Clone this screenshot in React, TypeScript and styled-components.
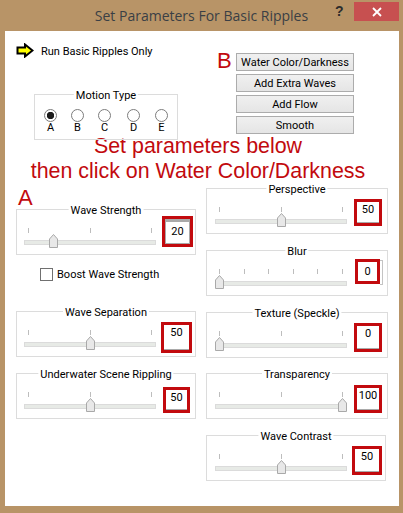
import React from 'react';
import styled, { createGlobalStyle } from 'styled-components';

const GlobalStyle = createGlobalStyle`
    html, body {
        margin: 0;
        padding: 0;
        background: #b89467;
    }
`;

type Field = {
    title: string;
    value: number;
    ticks: number;
    box: { w: number; h: number; x: number; y: number };
    line: 'top' | 'bottom' | 'side';
};

const leftFields: Field[] = [
    { title: 'Wave Separation', value: 50, ticks: 3, box: { w: 31, h: 31, x: 5, y: 10 }, line: 'bottom' },
    { title: 'Underwater Scene Rippling', value: 50, ticks: 3, box: { w: 27, h: 26, x: 7, y: 13 }, line: 'bottom' },
];

const rightFields: Field[] = [
    { title: 'Perspective', value: 50, ticks: 3, box: { w: 28, h: 27, x: 7, y: 10 }, line: 'bottom' },
    { title: 'Blur', value: 0, ticks: 6, box: { w: 25, h: 25, x: 8, y: 8 }, line: 'side' },
    { title: 'Texture (Speckle)', value: 0, ticks: 3, box: { w: 28, h: 29, x: 7, y: 10 }, line: 'bottom' },
    { title: 'Transparency', value: 100, ticks: 3, box: { w: 28, h: 28, x: 7, y: 11 }, line: 'bottom' },
    { title: 'Wave Contrast', value: 50, ticks: 3, box: { w: 30, h: 29, x: 5, y: 10 }, line: 'bottom' },
];

const Thumb = () => (
    <ThumbIcon width="9" height="14" viewBox="0 0 9 14">
        <path d="M0.5 13.5V5L4.5 0.5L8.5 5V13.5Z" fill="#e8e8e8" stroke="#a9a9a9" />
    </ThumbIcon>
);

const ParamGroup: React.FC<{ field: Field; wide?: boolean; narrow?: boolean }> = ({ field, wide, narrow }) => (
    <Group $wide={wide} $narrow={narrow}>
        <Legend>{field.title}</Legend>
        <SliderArea>
            <Ticks>
                {Array.from({ length: field.ticks }).map((_, i) => <Tick key={i} />)}
            </Ticks>
            <Track>
                <ThumbSlot style={{ left: `${(field.value / 100) * 123 - 1}px` }}>
                    <Thumb />
                </ThumbSlot>
            </Track>
        </SliderArea>
        <ValueBox $w={field.box.w} $h={field.box.h} $x={field.box.x} $y={field.box.y}>
            <ValueInner $line={field.line}>{field.value}</ValueInner>
        </ValueBox>
        {field.line === 'side' && <EditEdge />}
    </Group>
);

const App: React.FC = () => {
    return (
        <Frame>
            <GlobalStyle />
            <TitleBar>
                <Title>Set Parameters For Basic Ripples</Title>
                <HelpMark>?</HelpMark>
                <CloseButton>
                    <svg width="10" height="10" viewBox="0 0 10 10">
                        <path d="M1 1L9 9M9 1L1 9" stroke="#fff" strokeWidth="1.8" />
                    </svg>
                </CloseButton>
            </TitleBar>
            <Client>
                <TopRow>
                    <TopLeft>
                        <RunRow>
                            <svg width="18" height="15" viewBox="0 0 18 15">
                                <path d="M1.5 4.5H9V1.5L16.5 7.5L9 13.5V10.5H1.5Z" fill="#ffff00" stroke="#000" strokeWidth="2" />
                            </svg>
                            <RunLabel>Run Basic Ripples Only</RunLabel>
                        </RunRow>
                        <MotionGroup>
                            <Legend>Motion Type</Legend>
                            <RadioRow>
                                {['A', 'B', 'C', 'D', 'E'].map((name, i) => (
                                    <RadioItem key={name}>
                                        <Radio $checked={i === 0} />
                                        <Label>{name}</Label>
                                    </RadioItem>
                                ))}
                            </RadioRow>
                        </MotionGroup>
                    </TopLeft>
                    <TopRight>
                        <BigLetter>B</BigLetter>
                        <ButtonStack>
                            <PushButton>Water Color/Darkness</PushButton>
                            <PushButton>Add Extra Waves</PushButton>
                            <PushButton>Add Flow</PushButton>
                            <PushButton>Smooth</PushButton>
                        </ButtonStack>
                    </TopRight>
                </TopRow>
                <Note>
                    Set parameters below<br />
                    then click on Water Color/Darkness
                </Note>
                <Columns>
                    <LeftColumn>
                        <ALetter>A</ALetter>
                        <ParamGroup field={{ title: 'Wave Strength', value: 20, ticks: 3, box: { w: 31, h: 31, x: 6, y: 6 }, line: 'top' }} />
                        <BoostRow>
                            <CheckBox />
                            <Label>Boost Wave Strength</Label>
                        </BoostRow>
                        <LowerStack>
                            {leftFields.map(f => <ParamGroup key={f.title} field={f} />)}
                        </LowerStack>
                    </LeftColumn>
                    <RightColumn>
                        {rightFields.map(f => (
                            <ParamGroup key={f.title} field={f} wide narrow={f.title === 'Wave Contrast'} />
                        ))}
                    </RightColumn>
                </Columns>
            </Client>
        </Frame>
    );
};

const uiFont = `'Roboto', 'Liberation Sans', Arial, sans-serif`;
const red = '#c20a0e';

const Frame = styled.div`
    width: 403px;
    height: 513px;
    background-color: #b89467;
    overflow: hidden;
    font-family: 'Liberation Sans', Arial, sans-serif;
`;

const TitleBar = styled.div`
    position: relative;
    height: 31px;
    display: flex;
    align-items: center;
    justify-content: center;
`;

const Title = styled.div`
    font-family: 'Open Sans', sans-serif;
    font-size: 14px;
    color: #3a3f45;
`;

const HelpMark = styled.div`
    position: absolute;
    left: 335px;
    top: 3px;
    font-family: 'Liberation Sans', sans-serif;
    font-weight: bold;
    font-size: 14px;
    color: #2c2c2c;
`;

const CloseButton = styled.div`
    position: absolute;
    left: 354px;
    top: 2px;
    width: 45px;
    height: 19px;
    background-color: #c75050;
    display: flex;
    align-items: center;
    justify-content: center;
`;

const Client = styled.div`
    width: 394px;
    height: 475px;
    margin-left: 5px;
    padding: 0 11px;
    box-sizing: border-box;
    background-color: #fff;
`;

const TopRow = styled.div`
    display: flex;
    height: 109px;
`;

const TopLeft = styled.div`
    width: 201px;
`;

const RunRow = styled.div`
    display: flex;
    align-items: center;
    gap: 7px;
    height: 15px;
    margin-top: 12px;
`;

const Label = styled.span`
    font-family: ${uiFont};
    font-size: 11px;
    line-height: 12px;
    color: #000;
    white-space: nowrap;
`;

const RunLabel = styled(Label)`
    padding-top: 2px;
`;

const MotionGroup = styled.div`
    position: relative;
    box-sizing: border-box;
    width: 144px;
    height: 46px;
    margin: 36px 0 0 18px;
    border: 1px solid #dcdcdc;
`;

const RadioRow = styled.div`
    display: grid;
    grid-template-columns: 27px 27px 29px 28px 28px;
    padding: 14px 0 0 9px;
`;

const RadioItem = styled.div`
    width: 13px;
    display: flex;
    flex-direction: column;
    align-items: center;
`;

const Radio = styled.div<{ $checked?: boolean }>`
    box-sizing: border-box;
    flex-shrink: 0;
    width: 13px;
    height: 13px;
    border-radius: 50%;
    border: 1.3px solid #7c7c7c;
    background: ${p => (p.$checked
        ? 'radial-gradient(circle, #1c1c1c 0 3.4px, #fff 4px)'
        : '#fff')};
`;

const TopRight = styled.div`
    display: flex;
    align-items: flex-start;
    margin-top: 22px;
`;

const BigLetter = styled.div`
    width: 19px;
    font-size: 22px;
    line-height: 15px;
    color: ${red};
`;

const ButtonStack = styled.div`
    display: flex;
    flex-direction: column;
    gap: 3px;
    width: 118px;
`;

const PushButton = styled.button`
    box-sizing: border-box;
    height: 18px;
    padding: 0;
    border: 1px solid #acacac;
    background: linear-gradient(#f0f0f0, #e5e5e5);
    font-family: ${uiFont};
    font-size: 11px;
    color: #000;
    white-space: nowrap;
`;

const Note = styled.div`
    width: 372px;
    margin-top: -6px;
    height: 49px;
    padding-right: 8px;
    box-sizing: border-box;
    text-align: center;
    font-size: 21.4px;
    line-height: 24.5px;
    color: ${red};
    white-space: nowrap;
`;

const Columns = styled.div`
    display: flex;
    gap: 11px;
    margin-top: 5px;
`;

const LeftColumn = styled.div`
    width: 179px;
`;

const RightColumn = styled.div`
    width: 182px;
    display: flex;
    flex-direction: column;
    gap: 15.75px;
`;

const ALetter = styled.div`
    height: 21px;
    margin-left: 2px;
    font-size: 22px;
    line-height: 20px;
    color: ${red};
`;

const BoostRow = styled.div`
    display: flex;
    align-items: center;
    gap: 4px;
    margin: 13px 0 0 24px;
`;

const CheckBox = styled.div`
    box-sizing: border-box;
    width: 13px;
    height: 13px;
    border: 1px solid #707070;
    background: #fff;
`;

const LowerStack = styled.div`
    display: flex;
    flex-direction: column;
    gap: 16px;
    margin-top: 30px;
`;

const Group = styled.div<{ $wide?: boolean; $narrow?: boolean }>`
    position: relative;
    box-sizing: border-box;
    display: flex;
    align-items: flex-start;
    height: 46px;
    width: ${p => (p.$narrow ? '180px' : p.$wide ? '182px' : '180px')};
    border: 1px solid #dcdcdc;
    padding-left: ${p => (p.$wide ? '8px' : '7px')};
`;

const Legend = styled.div`
    position: absolute;
    top: -5px;
    left: 50%;
    transform: translateX(-50%);
    padding: 0 2px;
    background: #fff;
    font-family: ${uiFont};
    font-size: 11px;
    line-height: 12px;
    color: #000;
    white-space: nowrap;
`;

const SliderArea = styled.div`
    width: 132px;
    flex-shrink: 0;
    padding-top: 18px;
`;

const Ticks = styled.div`
    display: flex;
    justify-content: space-between;
    padding: 0 4px;
    height: 5px;
    margin-bottom: 7px;
`;

const Tick = styled.div`
    width: 1px;
    height: 5px;
    background: #bdbdbd;
`;

const Track = styled.div`
    position: relative;
    box-sizing: border-box;
    height: 5px;
    background: #e7eae6;
    border: 1px solid #dbdbdb;
`;

const ThumbSlot = styled.div`
    position: absolute;
    top: -7px;
    height: 14px;
`;

const ThumbIcon = styled.svg`
    display: block;
`;

const ValueBox = styled.div<{ $w: number; $h: number; $x: number; $y: number }>`
    box-sizing: border-box;
    flex-shrink: 0;
    width: ${p => p.$w}px;
    height: ${p => p.$h}px;
    margin: ${p => p.$y}px 0 0 ${p => p.$x}px;
    border: 3px solid ${red};
    background: #fff;
`;

const EditEdge = styled.div`
    width: 2px;
    height: 23px;
    margin-top: 9px;
    border: 1px solid #c4c4c4;
    border-left: none;
`;

const ValueInner = styled.div<{ $line: 'top' | 'bottom' | 'side' }>`
    box-sizing: border-box;
    height: 100%;
    text-align: center;
    font-family: ${uiFont};
    font-size: 11px;
    line-height: 15px;
    color: #000;
    ${p => p.$line === 'top' && `
        border: 1px solid #a9a9a9;
        border-top-width: 3px;
        padding-top: 2px;
    `}
    ${p => p.$line === 'bottom' && `
        border-bottom: 1px solid #a9a9a9;
    `}
    ${p => p.$line === 'side' && `
        padding-top: 2px;
    `}
`;

export default App;
